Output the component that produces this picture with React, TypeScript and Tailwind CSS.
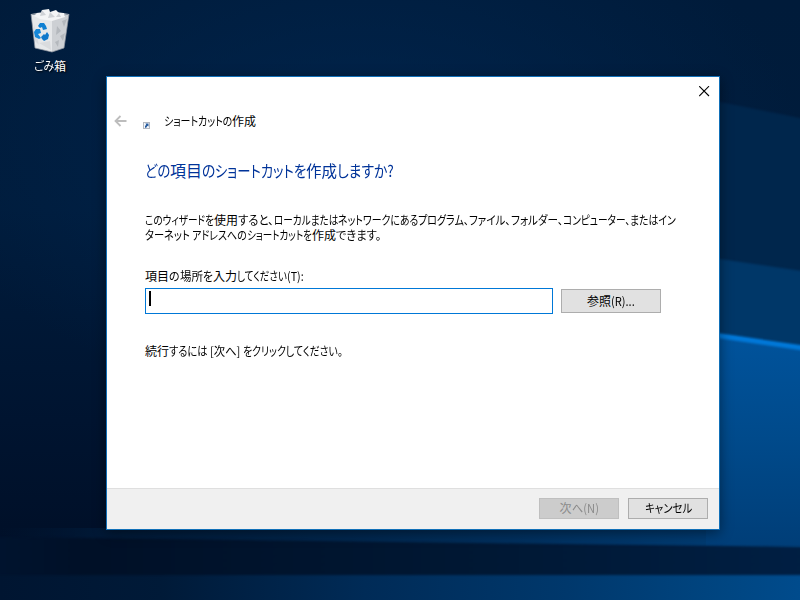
import React, { useLayoutEffect, useRef, useState } from "react";

type Run = [text: string, width: number];

interface RunProps {
  text: string;
  width: number;
}

// Squeezes a piece of text to the narrow metrics of the Windows UI font
const FitRun: React.FC<RunProps> = ({ text, width }) => {
  const ref = useRef<HTMLSpanElement>(null);
  const [scale, setScale] = useState(1);

  useLayoutEffect(() => {
    if (ref.current) {
      setScale(width / ref.current.offsetWidth);
    }
  }, [text, width]);

  return (
    <span className="inline-block align-top whitespace-pre" style={{ width }}>
      <span
        ref={ref}
        className="inline-block origin-left align-top"
        style={{ transform: `scaleX(${scale})` }}
      >
        {text}
      </span>
    </span>
  );
};

const Line: React.FC<{ runs: Run[] }> = ({ runs }) => (
  <span className="flex whitespace-nowrap">
    {runs.map(([text, width], i) => (
      <FitRun key={i} text={text} width={width} />
    ))}
  </span>
);

const TITLE: Run[] = [["ショートカットの", 68], ["作成", 24]];
const HEADING: Run[] = [
  ["どの", 25],
  ["項目", 32],
  ["の", 13],
  ["ショートカットを", 91],
  ["作成", 31],
  ["しますか?", 57],
];
const INTRO_1: Run[] = [
  ["このウィザードを", 69],
  ["使用", 24],
  ["すると、", 36],
  ["ローカルまたは", 64],
  ["ネットワークにある", 80],
  ["プログラム、", 51],
  ["ファイル、", 42],
  ["フォルダー、", 52],
  ["コンピューター、", 67],
  ["またはイン", 46],
];
const INTRO_2: Run[] = [
  ["ターネット ", 47],
  ["アドレスへの", 55],
  ["ショートカットを", 65],
  ["作成", 24],
  ["できます。", 45],
];
const LABEL: Run[] = [
  ["項目", 24],
  ["の", 11],
  ["場所", 23],
  ["を", 10],
  ["入力", 24],
  ["してください", 50],
  ["(T):", 17],
];
const HINT: Run[] = [
  ["続行", 24],
  ["するには ", 41],
  ["[次へ] ", 33],
  ["をクリックしてください。", 100],
];
const BROWSE: Run[] = [["参照", 24], ["(R)...", 24]];
const NEXT: Run[] = [["次", 12], ["へ(N)", 27]];
const CANCEL: Run[] = [["キャンセル", 47]];
const BIN: Run[] = [["ごみ", 20], ["箱", 12]];

const Wallpaper = () => (
  <svg className="absolute inset-0" width="800" height="600" viewBox="0 0 800 600">
    <defs>
      <linearGradient id="base" x1="0" y1="0" x2="0" y2="1">
        <stop offset="0" stopColor="#001b3a" />
        <stop offset="0.35" stopColor="#001c3c" />
        <stop offset="0.7" stopColor="#001430" />
        <stop offset="0.88" stopColor="#001029" />
        <stop offset="1" stopColor="#001531" />
      </linearGradient>
      <radialGradient id="haze" cx="0.45" cy="0.3" r="0.55">
        <stop offset="0" stopColor="#002650" stopOpacity="0.8" />
        <stop offset="1" stopColor="#002650" stopOpacity="0" />
      </radialGradient>
      <linearGradient id="floor" x1="0" y1="0" x2="1" y2="0">
        <stop offset="0" stopColor="#001531" />
        <stop offset="0.2" stopColor="#001a38" />
        <stop offset="0.45" stopColor="#002b57" />
        <stop offset="0.7" stopColor="#00386c" />
        <stop offset="0.9" stopColor="#004682" />
        <stop offset="1" stopColor="#004c8e" />
      </linearGradient>
      <linearGradient id="upper" x1="0" y1="0" x2="1" y2="0">
        <stop offset="0" stopColor="#001733" stopOpacity="0" />
        <stop offset="0.15" stopColor="#001b3a" />
        <stop offset="0.5" stopColor="#002a54" />
        <stop offset="0.85" stopColor="#003a70" />
        <stop offset="1" stopColor="#004480" />
      </linearGradient>
      <linearGradient id="band" x1="0" y1="0" x2="1" y2="0">
        <stop offset="0" stopColor="#00142f" />
        <stop offset="0.12" stopColor="#001027" />
        <stop offset="0.6" stopColor="#001834" />
        <stop offset="1" stopColor="#001f43" />
      </linearGradient>
      <linearGradient id="glow" x1="0" y1="0" x2="0" y2="1">
        <stop offset="0" stopColor="#00539c" />
        <stop offset="0.5" stopColor="#004a8b" />
        <stop offset="1" stopColor="#003e78" />
      </linearGradient>
      <filter
        id="soft"
        filterUnits="userSpaceOnUse"
        x="-20"
        y="-20"
        width="850"
        height="650"
        colorInterpolationFilters="sRGB"
      >
        <feGaussianBlur stdDeviation="1.2" />
      </filter>
    </defs>
    <rect width="800" height="600" fill="url(#base)" />
    <rect width="800" height="480" fill="url(#haze)" />
    <path d="M700 98L810 120V290H700Z" fill="#00264c" filter="url(#soft)" />
    <path d="M0 528H810V560H0Z" fill="url(#upper)" />
    <path d="M0 565H810V610H0Z" fill="url(#floor)" />
    <path d="M700 256L810 272V350H700Z" fill="#003768" filter="url(#soft)" />
    <path d="M706 332L810 348V546H706Z" fill="url(#glow)" />
    <path d="M700 333L810 349" stroke="#0078d8" strokeWidth="5" filter="url(#soft)" />
    <path d="M-10 537L810 547V575H-10Z" fill="url(#band)" filter="url(#soft)" />
  </svg>
);

const RecycleBin = () => (
  <svg width="40" height="46" viewBox="0 0 40 46">
    <path d="M1 6L22 11L22 44L5 40Z" fill="#e6e8ea" />
    <path d="M22 11L39 6L34 40L22 44Z" fill="#cdd0d4" />
    <path d="M1 6L22 11L39 6L28 4L12 4Z" fill="#a5acb4" />
    <path d="M4 8L7 5L11 5L12 2L19 1L20 4L26 2L29 5L34 5L35 9L22 13L10 11Z" fill="#f4f5f6" />
    <path d="M12 2L16 7L10 8ZM20 4L25 9L18 10ZM29 5L31 9L26 9Z" fill="#cfd2d6" />
    <path d="M27 18L31 23L26 27ZM32 13L37 11L34 19ZM30 28L35 25L33 33ZM25 34L29 32L28 39Z" fill="#b4b8bd" />
    <path d="M4 16L9 37L5 33ZM9 35L20 33L21 42Z" fill="#d9dbde" />
    <path d="M8 18L10 15L14 15L16 18L17 21L13 22L12 19L10 20Z" fill="#0f80d2" />
    <path d="M4 24L6 21L10 21L11 25L8 26L11 30L9 31L5 29Z" fill="#1687d8" />
    <path d="M11 29L14 26L15 27L17 24L19 27L18 31L14 33L12 31Z" fill="#0f78cb" />
    <path d="M1 6L5 40L22 44L34 40L39 6" fill="none" stroke="#9097a0" strokeWidth="0.7" />
  </svg>
);

const BackArrow = () => (
  <svg width="13" height="12" viewBox="0 0 13 12" fill="none" stroke="#bdbdbd" strokeWidth="1.8">
    <path d="M12.5 6H1.5M6.5 1L1.5 6L6.5 11" />
  </svg>
);

const ShortcutIcon = () => (
  <svg width="7" height="7" viewBox="0 0 7 7">
    <rect x="0.5" y="0.5" width="6" height="6" fill="#f3f5f8" stroke="#b3b8c0" />
    <path d="M2 5.8V4L3.2 2.8L2.4 1.5H5.5V4.6L4.5 3.8L3.2 5.8Z" fill="#245a9e" />
  </svg>
);

const App: React.FC = () => {
  return (
    <div className="relative h-[600px] w-[800px] overflow-hidden bg-[#001733] font-['Noto_Sans_CJK_JP',sans-serif] text-[12px] leading-[15px] text-black [font-feature-settings:'palt']">
      <Wallpaper />

      <div className="absolute top-[8px] left-[12px] flex w-[76px] flex-col items-center">
        <RecycleBin />
        <div className="mt-1 text-white [text-shadow:1px_1px_2px_#000]">
          <Line runs={BIN} />
        </div>
      </div>

      <div className="absolute top-[76px] left-[106px] flex h-[454px] w-[614px] flex-col border border-[#1170b8] bg-white shadow-[0_3px_12px_rgba(0,0,0,0.45)]">
        <div className="flex h-[29px] justify-end pt-[9px] pr-[9px]">
          <svg width="11" height="11" viewBox="0 0 11 11" stroke="#000" strokeWidth="1.1">
            <path d="M0.2 0.2L10 10M10 0.2L0.2 10" />
          </svg>
        </div>

        <div className="flex h-[30px] items-center pl-[7px]">
          <BackArrow />
          <div className="mt-[9px] ml-4">
            <ShortcutIcon />
          </div>
          <div className="-mt-[2px] ml-[14px]">
            <Line runs={TITLE} />
          </div>
        </div>

        <div className="flex grow flex-col pl-[38px]">
          <h1 className="mt-[22px] text-[16px] leading-[24px] text-[#003399]">
            <Line runs={HEADING} />
          </h1>
          <div className="mt-[30px]">
            <Line runs={INTRO_1} />
            <Line runs={INTRO_2} />
          </div>
          <div className="mt-[26px]">
            <Line runs={LABEL} />
          </div>
          <div className="mt-[5px] flex items-center gap-2">
            <div className="h-[26px] w-[408px] border border-[#0078d7] bg-white pt-[2px] pl-[3px]">
              <div className="h-[15px] w-[2px] bg-black" />
            </div>
            <button className="flex h-[24px] w-[100px] items-center justify-center border border-[#adadad] bg-[#e1e1e1] pb-[2px]">
              <Line runs={BROWSE} />
            </button>
          </div>
          <div className="mt-[29px]">
            <Line runs={HINT} />
          </div>
        </div>

        <div className="flex h-[41px] items-start justify-end gap-[9px] border-t border-[#dfdfdf] bg-[#f0f0f0] pt-[9px] pr-[11px]">
          <button
            className="flex h-[21px] w-[80px] items-center justify-center border border-[#bfbfbf] bg-[#cccccc] pb-[2px] text-[#8b8b8b]"
            disabled
          >
            <Line runs={NEXT} />
          </button>
          <button className="flex h-[21px] w-[80px] items-center justify-center border border-[#adadad] bg-[#e1e1e1] pb-[2px]">
            <Line runs={CANCEL} />
          </button>
        </div>
      </div>
    </div>
  );
};

export default App;
